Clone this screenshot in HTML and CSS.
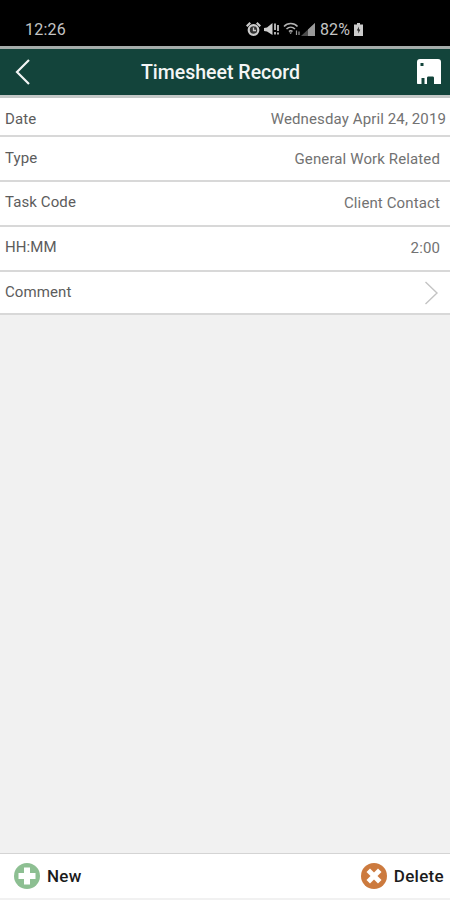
FILE: index.html
```html
<!DOCTYPE html>
<html lang="en">
  <head>
    <meta charset="UTF-8" />
    <meta name="viewport" content="width=device-width, initial-scale=1.0" />
    <title>Timesheet Record</title>
    <link rel="stylesheet" href="styles.css">
  </head>
  <body>
    <div class="status-bar">
      <span class="status-time">12:26</span>
      <div class="status-icons">
        <svg class="status-icon" width="15" height="14" viewBox="0 0 15 14">
          <circle cx="7.5" cy="8" r="4.8" fill="#333" stroke="#ccc" stroke-width="2.2" />
          <path d="M7.5 5.5V8.5H10" fill="none" stroke="#ccc" stroke-width="1.3" />
          <path d="M0 3.5L3.5 0L5 1.5L1.5 5ZM15 3.5L11.5 0L10 1.5L13.5 5Z" fill="#ccc" />
        </svg>
        <svg class="status-icon mute" width="15" height="14" viewBox="0 0 15 14">
          <path d="M0 6L3 5.5L8.5 1V13L3 9.5L0 9Z" fill="#ccc" />
          <path d="M11 1.5V8M14 3V9M11 10V12.5M14 10.5V12.5" stroke="#ccc" stroke-width="1.7" />
        </svg>
        <svg class="status-icon wifi" width="18" height="14" viewBox="0 0 18 14">
          <path d="M1 4.5C4.5 0.5 11 0.5 14.5 4.5M3.5 7C6 4.5 9.5 4.5 12 7M6 9.5C7 8.5 8.5 8.5 9.5 9.5" fill="none" stroke="#b4b4b4" stroke-width="1.5" />
          <path d="M7.7 12L6.2 10.6H9.2Z" fill="#b4b4b4" />
          <path d="M13.5 8.5V13M16 9.5V13" stroke="#999" stroke-width="1.2" />
        </svg>
        <svg class="status-icon" width="14" height="13" viewBox="0 0 14 13">
          <path d="M0 13L14 0V13Z" fill="#4d4d4d" />
          <path d="M7 13V6.5L14 0V13Z" fill="#999" />
        </svg>
        <span class="status-battery">82%</span>
        <svg class="status-icon" width="9" height="13" viewBox="0 0 9 13">
          <path d="M3 0H6V1.5H9V13H0V1.5H3Z" fill="#ccc" />
          <path d="M5 3.5L2.8 7.5H4.3V10.5L6.3 6.5H4.8Z" fill="#222" />
        </svg>
      </div>
    </div>

    <div class="header">
      <svg class="back-icon" width="18" height="28" viewBox="0 0 18 28">
        <path d="M15 2L3 14L15 26" fill="none" stroke="#f2f5f4" stroke-width="2.2" />
      </svg>
      <h1 class="header-title">Timesheet Record</h1>
      <svg class="save-icon" width="24" height="26" viewBox="0 0 24 26">
        <path d="M3 0H21C23 0 24 1 24 3V25H17V19C17 18 16.5 17.5 15.5 17.5H11.5C10.5 17.5 10 18 10 19V25H7.5V19H4.5V25H1C0.4 25 0 24.6 0 24V3C0 1 1 0 3 0Z" fill="#fff" />
        <rect x="3.5" y="4" width="3" height="3" fill="#13443b" />
      </svg>
    </div>

    <div class="record-list">
      <div class="record-row row-date">
        <span class="row-label">Date</span>
        <span class="row-value">Wednesday April 24, 2019</span>
      </div>
      <div class="record-row row-type">
        <span class="row-label">Type</span>
        <span class="row-value">General Work Related</span>
      </div>
      <div class="record-row">
        <span class="row-label">Task Code</span>
        <span class="row-value">Client Contact</span>
      </div>
      <div class="record-row">
        <span class="row-label">HH:MM</span>
        <span class="row-value">2:00</span>
      </div>
      <div class="record-row row-comment">
        <span class="row-label">Comment</span>
        <svg class="row-chevron" width="15" height="24" viewBox="0 0 15 24">
          <path d="M1.5 1L13 12L1.5 23" fill="none" stroke="#c4c4c4" stroke-width="1.4" />
        </svg>
      </div>
    </div>

    <div class="spacer"></div>

    <div class="footer">
      <div class="footer-action">
        <svg width="26" height="26" viewBox="0 0 26 26">
          <circle cx="13" cy="13" r="13" fill="#8dbf92" />
          <path d="M10 4.5H16V10H21.5V16H16V21.5H10V16H4.5V10H10Z" fill="#fff" />
        </svg>
        <span>New</span>
      </div>
      <div class="footer-action">
        <svg width="26" height="26" viewBox="0 0 26 26">
          <circle cx="13" cy="13" r="13" fill="#cc7a3e" />
          <path d="M9 5.5L13 9.5L17 5.5L20.5 9L16.5 13L20.5 17L17 20.5L13 16.5L9 20.5L5.5 17L9.5 13L5.5 9Z" fill="#fff" />
        </svg>
        <span>Delete</span>
      </div>
    </div>
  </body>
</html>
```

FILE: styles.css
```css
html,
body {
  height: 100%;
}
body {
  margin: 0;
  display: flex;
  flex-direction: column;
  background-color: #f1f1f1;
  font-family: Roboto, "Liberation Sans", sans-serif;
  overflow: hidden;
}
.status-bar {
  flex: none;
  height: 46px;
  box-sizing: border-box;
  padding: 12px 87px 0 25px;
  display: flex;
  justify-content: space-between;
  align-items: center;
  background-color: #000;
  color: #c4c4c4;
  font-size: 16px;
}
.status-time {
  letter-spacing: 0.2px;
}
.status-icons {
  display: flex;
  align-items: center;
}
.status-icon {
  display: block;
}
.mute {
  margin-left: 3px;
}
.wifi {
  margin-left: 4px;
}
.status-battery {
  margin-left: 5px;
  margin-right: 4px;
  letter-spacing: 0.1px;
}
.header {
  flex: none;
  height: 46px;
  padding: 0 9px 0 14px;
  display: flex;
  justify-content: space-between;
  align-items: center;
  background-color: #13443b;
  border-top: 3px solid #a5acaa;
  border-bottom: 3px solid #c4c8c7;
}
.header-title {
  margin: 0 8px 0 0;
  color: #f4f6f5;
  font-size: 19.5px;
  font-weight: 500;
}
.back-icon {
  display: block;
}
.save-icon {
  display: block;
}
.record-list {
  flex: none;
}
.record-row {
  height: 45px;
  box-sizing: border-box;
  padding: 0 10px 3px 5px;
  display: flex;
  justify-content: space-between;
  align-items: center;
  background-color: #fff;
  border-bottom: 2px solid #d8d8d8;
  font-size: 15px;
}
.row-date {
  height: 39px;
  padding: 4px 4px 0 5px;
}
.row-type {
  padding-bottom: 1px;
}
.row-comment {
  height: 43px;
  padding-bottom: 1px;
}
.row-label {
  color: #5c5c5c;
  letter-spacing: 0.1px;
}
.row-value {
  margin-top: 2px;
  color: #727272;
  letter-spacing: 0.12px;
}
.row-date .row-value {
  margin-top: 0;
}
.row-chevron {
  display: block;
  margin-top: 2px;
  margin-right: 1px;
}
.spacer {
  flex: 1;
}
.footer {
  flex: none;
  height: 44px;
  margin-bottom: 2px;
  padding: 0 6px 0 14px;
  display: flex;
  justify-content: space-between;
  align-items: center;
  background-color: #fff;
  border-top: 1px solid #d4d4d4;
}
.footer-action {
  display: flex;
  align-items: center;
  gap: 7px;
  color: #1c1c1c;
  font-size: 17px;
  font-weight: 500;
  letter-spacing: 0.3px;
}
.footer-action svg {
  display: block;
}
```
